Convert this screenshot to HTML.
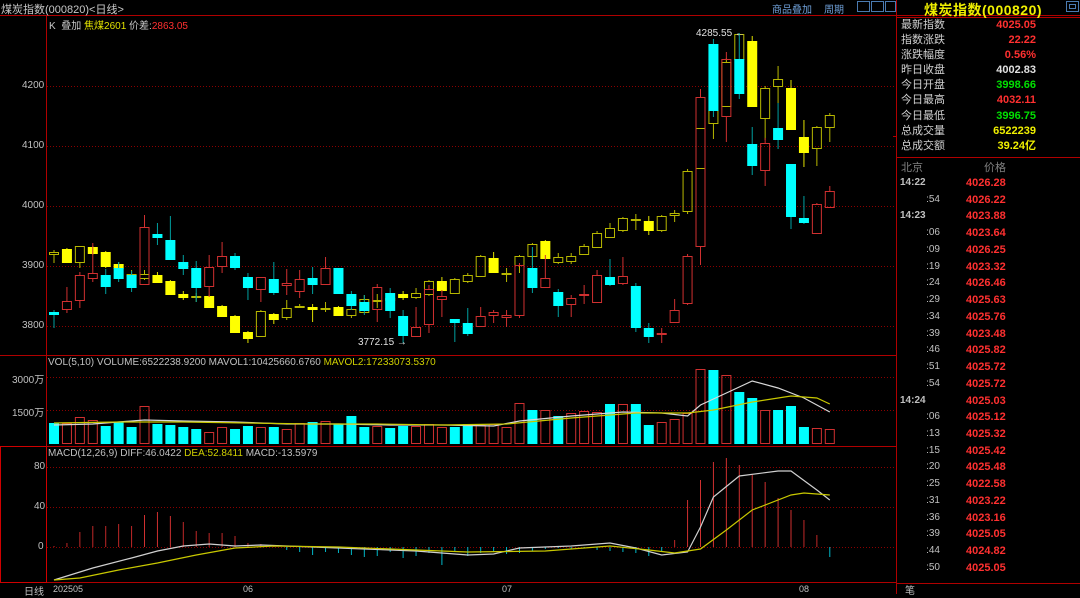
<!DOCTYPE html>
<html><head><meta charset="utf-8">
<style>
body{margin:0;background:#000;width:1080px;height:594px;overflow:hidden;font-family:"Liberation Sans","Noto Sans CJK SC",sans-serif;color:#c0c0c0}
.a{position:absolute;white-space:nowrap}
#p{position:absolute;left:0;top:0}
.r td{padding:0}
</style></head><body>
<svg id="p" width="1080" height="594" xmlns="http://www.w3.org/2000/svg">
<g id="grid" stroke="#8a0000" stroke-width="1" stroke-dasharray="1,2">
<line x1="47" y1="86.5" x2="896" y2="86.5"/><line x1="47" y1="146.5" x2="896" y2="146.5"/>
<line x1="47" y1="206.5" x2="896" y2="206.5"/><line x1="47" y1="266.5" x2="896" y2="266.5"/>
<line x1="47" y1="326.5" x2="896" y2="326.5"/>
<line x1="47" y1="377.5" x2="896" y2="377.5"/><line x1="47" y1="410.5" x2="896" y2="410.5"/>
<line x1="47" y1="467.5" x2="896" y2="467.5"/><line x1="47" y1="507.5" x2="896" y2="507.5"/>
<line x1="47" y1="547.5" x2="896" y2="547.5"/>
</g>
<g stroke="#b00000" stroke-width="1" fill="none">
<line x1="0" y1="15.5" x2="1080" y2="15.5"/>
<line x1="46.5" y1="16" x2="46.5" y2="582"/>
<line x1="896.5" y1="0" x2="896.5" y2="594"/>
<line x1="0" y1="355.5" x2="896" y2="355.5"/>
<line x1="0" y1="582.5" x2="896" y2="582.5"/>
<rect x="0.5" y="446.5" width="46" height="136" stroke="#d00000"/>
<line x1="46" y1="446.5" x2="896" y2="446.5"/>
<line x1="897" y1="157.5" x2="1080" y2="157.5"/>
<line x1="897" y1="17.5" x2="1080" y2="17.5"/>
<line x1="897" y1="583.5" x2="1080" y2="583.5"/>
<line x1="893" y1="136.5" x2="896" y2="136.5"/>
</g>
<g id="c"></g>
<g fill="none" stroke="#4a7ab0" stroke-width="1">
<rect x="857.5" y="1.5" width="12" height="10"/><rect x="871.5" y="1.5" width="12" height="10"/><rect x="885.5" y="1.5" width="10" height="10"/>
<rect x="1066.5" y="1.5" width="12" height="10"/><rect x="1069.5" y="4.5" width="6" height="4"/>
</g>
</svg>
<div class="a" style="left:1px;top:1px;font-size:11px;color:#c8c8c8">煤炭指数(000820)&lt;日线&gt;</div>
<div class="a" style="left:772px;top:1px;font-size:10px;color:#6fa0d8">商品叠加</div>
<div class="a" style="left:824px;top:1px;font-size:10px;color:#6fa0d8">周期</div>
<div class="a" style="left:49px;top:17px;font-size:10px;color:#c8c8c8">K &nbsp;叠加 <span style="color:#e0e000">焦煤2601</span> 价差:<span style="color:#ff3030">2863.05</span></div>
<div class="a" style="left:22px;top:80px;font-size:10px;color:#c0c0c0">4200</div>
<div class="a" style="left:22px;top:140px;font-size:10px">4100</div>
<div class="a" style="left:22px;top:200px;font-size:10px">4000</div>
<div class="a" style="left:22px;top:260px;font-size:10px">3900</div>
<div class="a" style="left:22px;top:320px;font-size:10px">3800</div>
<div class="a" style="left:696px;top:28px;font-size:10px;color:#e0e0e0">4285.55 ←</div>
<div class="a" style="left:358px;top:337px;font-size:10px;color:#e0e0e0">3772.15 →</div>
<div class="a" style="left:48px;top:357px;font-size:10px;color:#c0c0c0">VOL(5,10) VOLUME:6522238.9200 MAVOL1:10425660.6760 <span style="color:#d0d000">MAVOL2:17233073.5370</span></div>
<div class="a" style="left:12px;top:371px;font-size:10px">3000万</div>
<div class="a" style="left:12px;top:404px;font-size:10px">1500万</div>
<div class="a" style="left:48px;top:448px;font-size:10px">MACD(12,26,9) DIFF:46.0422 <span style="color:#d0d000">DEA:52.8411</span> MACD:-13.5979</div>
<div class="a" style="left:34px;top:461px;font-size:10px">80</div>
<div class="a" style="left:34px;top:501px;font-size:10px">40</div>
<div class="a" style="left:38px;top:541px;font-size:10px">0</div>
<div class="a" style="left:24px;top:583px;font-size:10px">日线</div>
<div class="a" style="left:53px;top:584px;font-size:9px">202505</div>
<div class="a" style="left:243px;top:584px;font-size:9px">06</div>
<div class="a" style="left:502px;top:584px;font-size:9px">07</div>
<div class="a" style="left:799px;top:584px;font-size:9px">08</div>
<div class="a" style="left:924px;top:0px;font-size:14px;font-weight:bold;color:#f0f000;letter-spacing:0.5px">煤炭指数(000820)</div>
<div class="a" style="left:901px;top:18px;font-size:11px;line-height:15.1px;color:#d0d0d0">最新指数<br>指数涨跌<br>涨跌幅度<br>昨日收盘<br>今日开盘<br>今日最高<br>今日最低<br>总成交量<br>总成交额</div>
<div class="a" style="left:940px;width:96px;top:18px;font-size:11px;line-height:15.1px;text-align:right;font-weight:bold">
<span style="color:#ff3030">4025.05</span><br><span style="color:#ff3030">22.22</span><br><span style="color:#ff3030">0.56%</span><br><span style="color:#e0e0e0">4002.83</span><br><span style="color:#00e000">3998.66</span><br><span style="color:#ff3030">4032.11</span><br><span style="color:#00e000">3996.75</span><br><span style="color:#f0f000">6522239</span><br><span style="color:#f0f000">39.24亿</span></div>
<div class="a" style="left:901px;top:159px;font-size:11px;color:#808080">北京</div>
<div class="a" style="left:984px;top:159px;font-size:11px;color:#808080">价格</div>
<div id="ticks"></div>
<div class="a" style="left:905px;top:582px;font-size:10px;color:#c0c0c0">笔</div>
<script>
var S="http://www.w3.org/2000/svg",g=document.getElementById('c');
function el(n,a){var e=document.createElementNS(S,n);for(var k in a)e.setAttribute(k,a[k]);g.appendChild(e);return e;}
function X(i){return 54+12.93*i;}
// yellow overlay: [top,bottom,hi,lo,type f=filled h=hollow]
var Y=[[252,254,250,263,'h'],[249,262,248,263,'f'],[246,262,246,268,'h'],[247,253,246,255,'f'],[252,266,251,268,'f'],[264,268,262,270,'f'],[274,276,270,282,'h'],[274,278,270,280,'h'],[275,282,272,283,'f'],[281,294,280,295,'f'],[294,297,291,300,'f'],[296,297,293,302,'h'],[296,307,295,308,'f'],[306,316,305,317,'f'],[316,332,315,333,'f'],[332,338,331,343,'f'],[311,336,310,337,'h'],[314,319,313,324,'f'],[308,317,300,320,'h'],[306,307,304,308,'h'],[307,309,304,322,'f'],[308,309,302,312,'h'],[307,315,306,316,'f'],[309,315,308,318,'h'],[299,312,295,313,'h'],[300,301,294,308,'h'],[298,300,294,303,'h'],[294,297,291,300,'f'],[293,297,288,299,'h'],[281,294,280,296,'h'],[281,290,277,292,'f'],[279,293,278,294,'h'],[275,281,273,283,'h'],[256,276,255,277,'h'],[258,272,252,273,'f'],[273,274,268,282,'h'],[256,265,255,273,'h'],[244,256,243,265,'h'],[241,258,240,259,'f'],[257,262,253,264,'h'],[256,261,253,264,'h'],[246,254,244,255,'h'],[233,247,231,248,'h'],[228,237,223,238,'h'],[218,230,217,232,'h'],[219,220,214,230,'h'],[221,230,216,235,'f'],[216,230,215,232,'h'],[213,215,210,222,'h'],[171,211,169,214,'h'],[128,168,128,168,'h'],[110,123,104,139,'h'],[62,106,58,107,'h'],[34,59,34,60,'h'],[41,106,36,107,'f'],[88,118,86,140,'h'],[79,86,66,103,'h'],[88,129,80,130,'f'],[137,152,120,167,'f'],[127,148,126,166,'h'],[115,127,113,142,'h']];
var M=[[312,314,310,328,'c'],[301,309,287,313,'r'],[275,300,272,308,'r'],[273,278,243,282,'r'],[275,286,269,294,'c'],[268,278,262,282,'c'],[275,287,271,292,'c'],[227,284,215,284,'r'],[234,237,223,245,'c'],[240,259,216,260,'c'],[262,268,255,275,'c'],[268,287,261,302,'c'],[267,286,255,297,'r'],[256,266,242,273,'r'],[256,267,253,270,'c'],[277,287,273,300,'c'],[277,289,277,302,'r'],[279,292,262,295,'c'],[283,285,269,295,'r'],[279,291,270,298,'r'],[278,284,267,294,'c'],[268,284,257,285,'r'],[268,293,268,293,'c'],[294,305,291,310,'c'],[302,310,295,315,'c'],[287,309,284,322,'r'],[293,310,288,318,'c'],[316,335,310,343,'c'],[327,336,307,337,'r'],[289,324,285,333,'r'],[296,299,290,317,'r'],[319,322,319,342,'c'],[323,333,308,336,'c'],[316,326,307,327,'r'],[312,315,310,323,'r'],[315,317,310,327,'r'],[265,315,263,318,'r'],[268,287,247,293,'c'],[278,287,255,287,'r'],[292,305,289,317,'c'],[298,304,295,317,'r'],[294,295,285,304,'r'],[275,302,270,302,'r'],[277,284,259,286,'c'],[276,283,257,285,'r'],[286,327,283,332,'c'],[328,336,323,343,'c'],[333,334,328,343,'r'],[310,322,299,322,'r'],[256,303,254,305,'r'],[97,246,89,265,'r'],[44,110,39,117,'c'],[59,116,52,142,'r'],[59,93,33,99,'c'],[144,165,127,175,'c'],[143,170,138,186,'r'],[128,139,103,149,'c'],[164,216,164,229,'c'],[218,222,196,224,'c'],[204,233,203,233,'r'],[191,207,186,208,'r']];
function cand(d,i,up,fill,wc){var x=X(i),w=10;
 if(d[2]<d[0])el('line',{x1:x,y1:d[2],x2:x,y2:d[0],stroke:wc});
 if(d[3]>d[1])el('line',{x1:x,y1:d[1],x2:x,y2:d[3],stroke:wc});
 var h=Math.max(1,d[1]-d[0]);
 if(d[4]==up)el('rect',{x:x-w/2+0.5,y:d[0]+0.5,width:w-1,height:h,fill:'none',stroke:wc});
 else el('rect',{x:x-w/2,y:d[0],width:w,height:h+1,fill:fill});}
Y.forEach(function(d,i){cand(d,i,'h','#ffff00',d[4]=='h'?'#b8b800':'#e0e000');});
M.forEach(function(d,i){cand(d,i,'r','#00ffff',d[4]=='r'?'#d03030':'#00a0a0');});
// volume
var V=[423,423,417,420,426,422,427,406,424,425,427,429,432,427,429,426,427,427,429,423,422,421,424,416,427,426,428,426,426,424,427,427,424,425,424,427,403,410,410,416,413,411,412,404,404,404,425,422,419,413,369,370,375,392,398,410,410,406,427,428,429];
V.forEach(function(t,i){var x=X(i);if(M[i][4]=='r')el('rect',{x:x-5+0.5,y:t+0.5,width:9,height:443-t,fill:'none',stroke:'#d03030'});else el('rect',{x:x-5,y:t,width:10,height:444-t,fill:'#00ffff'});});
function line(pts,c){var s='';pts.forEach(function(p,k){s+=(k?'L':'M')+X(p[0])+','+p[1];});el('path',{d:s,fill:'none',stroke:c,'stroke-width':1.2});}
line([[0,425],[3,424],[7,420],[10,421],[14,422],[18,424],[22,424],[26,425],[30,425],[34,426],[36,421],[40,416],[44,412],[47,413],[49,416],[50,405],[52,393],[54,381],[56,388],[58,398],[60,412]],'#d8d8d8');
line([[0,423],[5,422],[10,422],[15,423],[20,424],[25,424],[30,425],[35,424],[40,418],[45,413],[49,413],[51,410],[54,402],[57,396],[59,398],[60,404]],'#c8c800');
// macd
var H=[546,543,532,526,526,524,526,515,512,516,522,531,533,533,536,543,544,546,550,552,555,552,553,555,557,556,552,558,556,553,565,552,556,553,552,554,553,551,549,548,549,548,550,551,552,553,556,552,540,500,480,462,458,465,475,482,498,510,520,535,557];
H.forEach(function(t,i){var x=X(i);if(t<547)el('line',{x1:x,y1:t,x2:x,y2:547,stroke:t<520?'#d03030':'#c02828'});else el('line',{x1:x,y1:547,x2:x,y2:t,stroke:'#00b8c8'});});
line([[0,580],[3,568],[6,558],[8,551],[10,546],[12,544],[14,546],[16,545],[18,546],[20,547],[24,549],[28,551],[32,555],[34,554],[36,548],[40,546],[43,543],[45,548],[47,555],[49,552],[50,527],[51,497],[53,476],[56,471],[57,471],[59,490],[60,500]],'#d0d0d0');
line([[0,580],[2,578],[5,570],[8,563],[11,555],[14,548],[17,546],[22,547],[28,550],[32,552],[38,551],[43,546],[46,550],[48,553],[50,549],[52,530],[54,510],[57,495],[58,493],[60,495]],'#c8c800');
// ticks
var T=[['14:22','4026.28',1],[':54','4026.22'],['14:23','4023.88',1],[':06','4023.64'],[':09','4026.25'],[':19','4023.32'],[':24','4026.46'],[':29','4025.63'],[':34','4025.76'],[':39','4023.48'],[':46','4025.82'],[':51','4025.72'],[':54','4025.72'],['14:24','4025.03',1],[':06','4025.12'],[':13','4025.32'],[':15','4025.42'],[':20','4025.48'],[':25','4022.58'],[':31','4023.22'],[':36','4023.16'],[':39','4025.05'],[':44','4024.82'],[':50','4025.05']];
</script>
<div class="a" style="left:900px;top:175px;font-size:10px;line-height:16.74px;color:#c0c0c0;width:40px;text-align:right">
<b style="float:left">14:22</b><br>:54<br><b style="float:left">14:23</b><br>:06<br>:09<br>:19<br>:24<br>:29<br>:34<br>:39<br>:46<br>:51<br>:54<br><b style="float:left">14:24</b><br>:06<br>:13<br>:15<br>:20<br>:25<br>:31<br>:36<br>:39<br>:44<br>:50</div>
<div class="a" style="left:966px;top:175px;font-size:11px;line-height:16.74px;color:#ff3030;font-weight:bold">4026.28<br>4026.22<br>4023.88<br>4023.64<br>4026.25<br>4023.32<br>4026.46<br>4025.63<br>4025.76<br>4023.48<br>4025.82<br>4025.72<br>4025.72<br>4025.03<br>4025.12<br>4025.32<br>4025.42<br>4025.48<br>4022.58<br>4023.22<br>4023.16<br>4025.05<br>4024.82<br>4025.05</div>
</body></html>
